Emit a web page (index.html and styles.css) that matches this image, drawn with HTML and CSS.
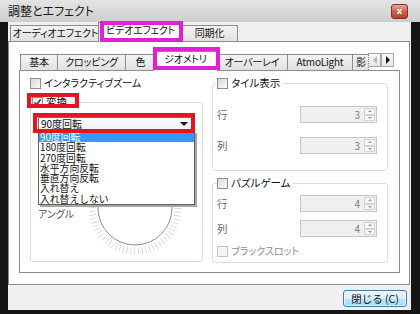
FILE: index.html
```html
<!DOCTYPE html>
<html lang="ja">
<head>
    <meta charset="UTF-8">
    <title>調整とエフェクト</title>
    <link rel="stylesheet" href="styles.css">
</head>
<body>
    <div class="window">
        <div class="titlebar">
            <span class="title">調整とエフェクト</span>
            <span class="close">x</span>
        </div>

        <div class="client">
            <!-- outer tabs -->
            <div class="tabs outer-tabs">
                <div class="tab w-audio">オーディオエフェクト</div>
                <div class="tab active w-video">ビデオエフェクト<span class="mark pink-video"></span></div>
                <div class="tab w-sync">同期化</div>
            </div>

            <div class="outer-panel">
                <!-- inner tabs -->
                <div class="tabs inner-tabs">
                    <div class="tab w-basic">基本</div>
                    <div class="tab w-crop">クロッピング</div>
                    <div class="tab w-color">色</div>
                    <div class="tab active w-geo">ジオメトリ<span class="mark pink-geo"></span></div>
                    <div class="tab w-overlay">オーバーレイ</div>
                    <div class="tab w-atmo">AtmoLight</div>
                    <div class="tab w-cut">影</div>
                    <div class="scroller">
                        <span class="arrow left"></span>
                        <span class="arrow right"></span>
                    </div>
                </div>

                <div class="inner-panel">
                    <div class="col col-left">
                        <div class="check"><span class="box"></span>インタラクティブズーム</div>

                        <div class="group transform">
                            <div class="group-title title-transform">
                                <span class="box checked">
                                    <svg width="9" height="9" viewBox="0 0 9 9"><path d="M1.5 4.5 L3.6 6.8 L7.6 1.6" fill="none" stroke="#243f8f" stroke-width="1.6"/></svg>
                                </span>変換
                                <span class="mark red-title"></span>
                            </div>

                            <div class="combo">
                                <span>90度回転</span>
                                <span class="drop"></span>
                                <span class="mark red-combo"></span>
                                <ul class="droplist">
                                    <li class="selected">90度回転</li>
                                    <li>180度回転</li>
                                    <li>270度回転</li>
                                    <li>水平方向反転</li>
                                    <li>垂直方向反転</li>
                                    <li>入れ替え</li>
                                    <li>入れ替えしない</li>
                                </ul>
                            </div>

                            <div class="angle">
                                <span class="angle-label">アングル</span>
                                <svg class="dial" width="96" height="96" viewBox="0 0 96 96">
                                    <circle cx="48" cy="48" r="43" fill="none" stroke="#c4c4c4" stroke-width="7" stroke-dasharray="0.6 3.15"/>
                                    <circle cx="48" cy="48" r="37" fill="#fff" stroke="#8e8e8e" stroke-width="1"/>
                                </svg>
                            </div>
                        </div>
                    </div>

                    <div class="col col-right">
                        <div class="group tile">
                            <div class="group-title"><span class="box"></span>タイル表示</div>
                            <div class="row first">
                                <span class="row-label">行</span>
                                <div class="spin"><span class="val">3</span><span class="spin-btns"><i class="up"></i><i class="down"></i></span></div>
                            </div>
                            <div class="row second">
                                <span class="row-label">列</span>
                                <div class="spin"><span class="val">3</span><span class="spin-btns"><i class="up"></i><i class="down"></i></span></div>
                            </div>
                        </div>

                        <div class="group puzzle">
                            <div class="group-title"><span class="box"></span>パズルゲーム</div>
                            <div class="row p-first">
                                <span class="row-label">行</span>
                                <div class="spin"><span class="val">4</span><span class="spin-btns"><i class="up"></i><i class="down"></i></span></div>
                            </div>
                            <div class="row p-second">
                                <span class="row-label">列</span>
                                <div class="spin"><span class="val">4</span><span class="spin-btns"><i class="up"></i><i class="down"></i></span></div>
                            </div>
                            <div class="check disabled"><span class="box"></span>ブラックスロット</div>
                        </div>
                    </div>
                </div>
            </div>

            <div class="button-bar">
                <button class="btn">閉じる (C)</button>
            </div>
        </div>
    </div>
</body>
</html>
```

FILE: styles.css
```css
* {
    box-sizing: border-box;
}

body {
    margin: 0;
    background: #151515;
    font-family: "Noto Sans CJK JP", "Noto Sans", sans-serif;
    font-size: 10px;
    font-feature-settings: "palt";
    color: #111;
}

.window {
    width: 420px;
    height: 314px;
    display: flex;
    flex-direction: column;
}

.titlebar {
    height: 22px;
    background: linear-gradient(#e4e4e4, #cecece);
    display: flex;
    align-items: center;
    justify-content: space-between;
    padding: 0 12px 0 8px;
}

.title {
    font-size: 12px;
    line-height: 16px;
    color: #1a1a1a;
}

.close {
    width: 17px;
    height: 15px;
    border: 1px solid #7a342c;
    border-radius: 3px;
    background: linear-gradient(#eba396, #d0604f 50%, #bd3d2b);
    color: #fff;
    font: bold 9px/12px "DejaVu Sans", sans-serif;
    text-align: center;
}

.client {
    flex: 1;
    margin: 0 9px 4px 8px;
    background: #f0f0f0;
    display: flex;
    flex-direction: column;
}

/* tabs */
.tabs {
    display: flex;
    align-items: flex-end;
}

.tab {
    position: relative;
    height: 16px;
    border: 1px solid #898c95;
    border-bottom: none;
    margin-right: -1px;
    background: linear-gradient(#f4f4f4, #e1e1e1);
    text-align: center;
    line-height: 14px;
    white-space: nowrap;
    letter-spacing: -0.2px;
}

.tab.active {
    background: #fff;
    margin: 0 -2px -1px -2px;
    z-index: 2;
}

.outer-tabs {
    height: 19px;
    padding-left: 2px;
}

.outer-tabs .tab.active { height: 20px; }

.w-audio { width: 91px; }
.w-video { width: 85px; }
.w-sync { width: 57px; }

.outer-panel {
    width: 402px;
    height: 244px;
    background: #fff;
    border: 1px solid #898c95;
}

.inner-tabs {
    height: 28px;
    padding-left: 11px;
}

.inner-tabs .tab.active { height: 20px; }

.w-basic { width: 38px; }
.w-crop { width: 69px; }
.w-color { width: 31px; }
.w-geo { width: 65px; }
.w-overlay { width: 72px; }
.w-atmo { width: 66px; }
.w-cut {
    width: 17px;
    overflow: hidden;
    text-align: left;
    padding-left: 3px;
    border-right: 1px dotted #898c95;
}

.scroller {
    display: flex;
    margin: 0 0 3px 0;
}

.arrow {
    width: 13px;
    height: 14px;
    border: 1px solid #a9a9a9;
    background: linear-gradient(#fafafa, #e6e6e6);
    display: flex;
    align-items: center;
    justify-content: center;
}

.arrow::before {
    content: "";
    border-top: 4px solid transparent;
    border-bottom: 4px solid transparent;
}

.arrow.left::before { border-right: 4px solid #b8b8b8; }
.arrow.right::before { border-left: 4px solid #111; }

.inner-panel {
    width: 381px;
    height: 203px;
    margin-left: 10px;
    border: 1px solid #898c95;
    background: #fff;
    padding: 6px 0 0 10px;
    display: flex;
    gap: 9px;
}

/* annotation frames */
.mark {
    position: absolute;
    border: 4px solid #e21fd4;
    pointer-events: none;
    z-index: 5;
}

.pink-video { left: 1px; top: -2px; width: 83px; height: 21px; }
.pink-geo { left: -1px; top: -5px; width: 67px; height: 23px; }
.red-title { border-color: #e3161f; left: -4px; top: -3px; width: 52px; height: 15px; }
.red-combo { border-color: #e3161f; left: -6px; top: -5px; width: 162px; height: 20px; }

/* checkboxes */
.check {
    display: flex;
    align-items: center;
    height: 12px;
    line-height: 12px;
}

.check.disabled { color: #8d8d8d; }

.box {
    width: 11px;
    height: 11px;
    border: 1px solid #8e8f8f;
    background: linear-gradient(135deg, #d8d8d8, #fbfbfb);
    margin-right: 3px;
    flex: none;
    display: flex;
}

.box.checked { background: linear-gradient(135deg, #e4e4e4, #ffffff); }

.check.disabled .box { border-color: #c5c5c5; background: #f4f4f4; }

/* group boxes */
.group {
    position: relative;
    border: 1px solid #d5dfe5;
    border-radius: 3px;
}

.group-title {
    position: relative;
    display: flex;
    align-items: center;
    width: fit-content;
    height: 12px;
    line-height: 12px;
    margin-top: -7px;
    padding-right: 3px;
    background: #fff;
    font-size: 10.5px;
}

.col-left { width: 173px; }
.col-right { width: 176px; }

.transform {
    height: 160px;
    margin-top: 13px;
    padding: 0 7px;
}

.title-transform {
    margin-left: -7px;
    padding-left: 1px;
}

.combo {
    position: relative;
    height: 14px;
    margin: 9px 0 0 0;
    width: 154px;
    border: 1px solid #707070;
    background: linear-gradient(#fdfdfd, #eef3f8);
    display: flex;
    align-items: center;
    justify-content: space-between;
    padding: 0 3px 0 2px;
    line-height: 12px;
    font-feature-settings: normal;
}

.drop {
    border-left: 4px solid transparent;
    border-right: 4px solid transparent;
    border-top: 4px solid #111;
}

.droplist {
    position: absolute;
    left: -1px;
    top: 13px;
    width: 157px;
    height: 74px;
    margin: 0;
    padding: 0;
    list-style: none;
    background: #fff;
    border: 1px solid #5f5f5f;
    box-shadow: 2px 2px 0 #a6a6a6;
    z-index: 4;
    font-size: 9.8px;
}

.droplist li {
    height: 10.3px;
    line-height: 10.3px;
    padding-left: 1px;
    white-space: nowrap;
}

.droplist li.selected {
    background: #3399ff;
    color: #fff;
}

.angle {
    display: flex;
    align-items: center;
    margin-top: 29px;
}

.angle-label {
    width: 49px;
    padding-top: 10px;
    color: #555;
}

/* right column */
.tile {
    height: 88px;
    margin-top: 6px;
    padding: 0 10px 0 4px;
}

.puzzle {
    height: 80px;
    margin-top: 12px;
    padding: 0 10px 0 4px;
}

.row {
    display: flex;
    align-items: center;
    height: 17px;
}

.row.first { margin-top: 17px; }
.row.second { margin-top: 14px; }
.row.p-first { margin-top: 6px; }
.row.p-second { margin-top: 8px; }
.puzzle .check { margin-top: 8px; }

.row-label {
    width: 83px;
    color: #6a6a6a;
    font-size: 10.5px;
}

.spin {
    width: 77px;
    height: 17px;
    border: 1px solid #c6c6c6;
    background: #f0f0f0;
    display: flex;
}

.val {
    flex: 1;
    text-align: right;
    padding-right: 3px;
    line-height: 15px;
    color: #7a7a7a;
}

.spin-btns {
    width: 13px;
    display: flex;
    flex-direction: column;
    padding: 1px;
}

.spin-btns i {
    flex: 1;
    border: 1px solid #d4d4d4;
    background: #f7f7f7;
    display: flex;
    align-items: center;
    justify-content: center;
}

.spin-btns i::before {
    content: "";
    border-left: 2px solid transparent;
    border-right: 2px solid transparent;
}

.spin-btns .up::before { border-bottom: 2px solid #9a9a9a; }
.spin-btns .down::before { border-top: 2px solid #9a9a9a; }

/* bottom */
.button-bar {
    flex: 1;
    display: flex;
    justify-content: flex-end;
    padding: 5px 4px 0 0;
}

.btn {
    width: 64px;
    height: 17px;
    padding: 0;
    border: 1px solid #3c7fb1;
    border-radius: 3px;
    background: linear-gradient(#eaf6fd, #d9f0fc 50%, #bee6fd 50%, #a7d9f5);
    box-shadow: inset 0 0 0 1px rgba(255, 255, 255, 0.6);
    font-family: "Noto Sans CJK JP", sans-serif;
    font-size: 10.5px;
    line-height: 13px;
    color: #111;
}
```
